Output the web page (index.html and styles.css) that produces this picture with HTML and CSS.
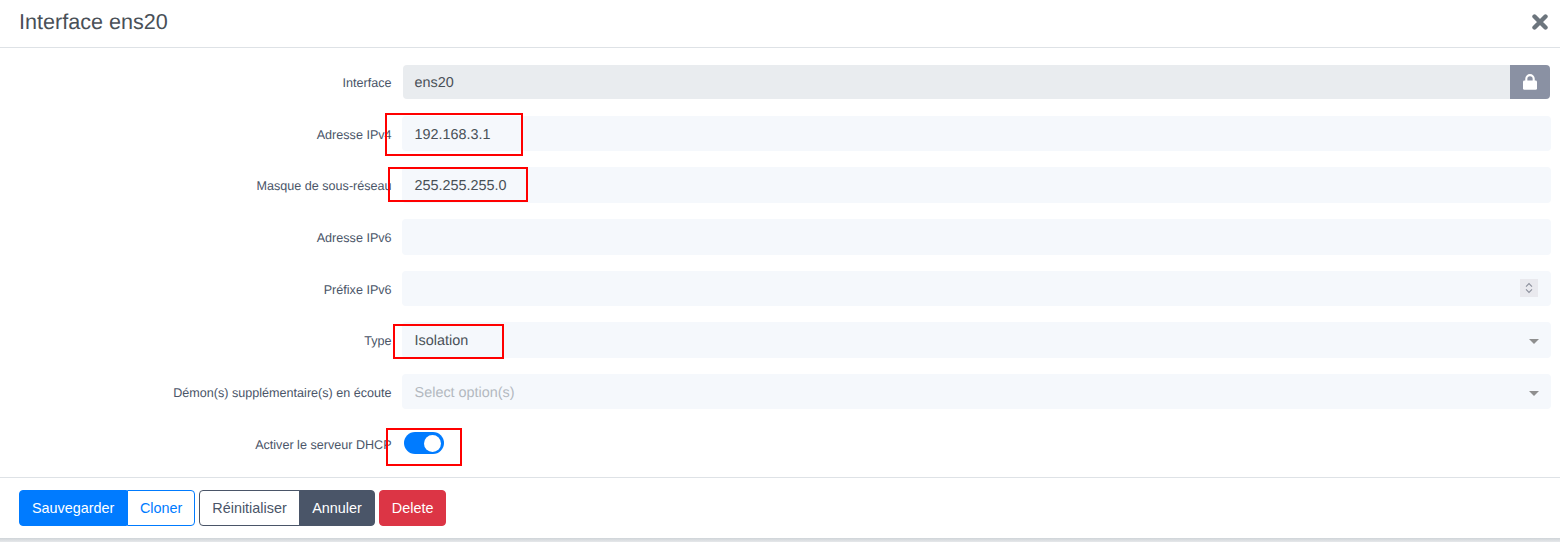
FILE: index.html
```html
<!DOCTYPE html>
<html lang="fr">
<head>
<meta charset="utf-8">
<title>Interface ens20</title>
<link rel="stylesheet" href="styles.css">
</head>
<body>
<div class="modal">
  <header class="head">
    <h1 class="title">Interface ens20</h1>
    <button class="close" aria-label="Fermer">
      <svg viewBox="0 0 16 16" width="16" height="16"><path d="M2.5 2.5 13.5 13.5M13.5 2.5 2.5 13.5" stroke="#6c757d" stroke-width="4.4" stroke-linecap="round" fill="none"/></svg>
    </button>
  </header>
  <form class="body">
    <div class="row">
      <label class="lab">Interface</label>
      <div class="field locked">
        <div class="input ro">ens20</div>
        <span class="addon">
          <svg viewBox="0 0 14 16" width="14" height="16"><path d="M3.3 7V4.8a3.7 3.7 0 0 1 7.4 0V7" stroke="#fff" stroke-width="2.1" fill="none"/><rect x="0" y="6.6" width="14" height="9.2" rx="1.4" fill="#fff"/></svg>
        </span>
      </div>
    </div>
    <div class="row">
      <label class="lab">Adresse IPv4</label>
      <div class="field"><div class="input">192.168.3.1</div><span class="mark m1"></span></div>
    </div>
    <div class="row">
      <label class="lab">Masque de sous-réseau</label>
      <div class="field"><div class="input">255.255.255.0</div><span class="mark m2"></span></div>
    </div>
    <div class="row">
      <label class="lab">Adresse IPv6</label>
      <div class="field"><div class="input"></div></div>
    </div>
    <div class="row">
      <label class="lab">Préfixe IPv6</label>
      <div class="field"><div class="input spin-wrap">
        <span class="spin"><svg viewBox="0 0 18 18" width="18" height="18"><path d="M6 7.6 9 4.6l3 3M6 10.4 9 13.4l3-3" stroke="#8b8f9c" stroke-width="1.1" fill="none"/></svg></span>
      </div></div>
    </div>
    <div class="row">
      <label class="lab">Type</label>
      <div class="field"><div class="input sel">Isolation<i class="caret"></i></div><span class="mark m3"></span></div>
    </div>
    <div class="row">
      <label class="lab">Démon(s) supplémentaire(s) en écoute</label>
      <div class="field"><div class="input sel ph">Select option(s)<i class="caret"></i></div></div>
    </div>
    <div class="row">
      <label class="lab lab-toggle">Activer le serveur DHCP</label>
      <div class="field"><span class="toggle"><span class="knob"></span></span><span class="mark m4"></span></div>
    </div>
  </form>
  <footer class="foot">
    <div class="group">
      <button class="btn primary">Sauvegarder</button><button class="btn out-primary">Cloner</button>
    </div>
    <div class="group">
      <button class="btn out-dark">Réinitialiser</button><button class="btn dark">Annuler</button>
    </div>
    <button class="btn danger">Delete</button>
  </footer>
</div>
<div class="strip"></div>
</body>
</html>
```
FILE: styles.css
```css
* { box-sizing: border-box; }
html, body { margin: 0; padding: 0; background: #fff; }
body {
  font-family: "Liberation Sans", Arial, sans-serif;
  color: #4a5568;
  height: 544px;
  overflow: hidden;
  text-rendering: geometricPrecision;
}
.modal { background: #fff; }
.head {
  height: 48px;
  border-bottom: 1px solid #dee2e6;
  display: flex;
  align-items: flex-start;
  justify-content: space-between;
  padding: 8px 12px 0 19px;
}
.title {
  margin: 0;
  font-size: 21.6px;
  line-height: 28px;
  font-weight: 400;
  color: #495057;
}
.close {
  border: 0;
  background: none;
  padding: 0;
  margin-top: 6px;
  line-height: 0;
}
.body {
  padding: 16.25px 9px 0 0;
  height: 429px;
}
.row {
  display: flex;
  height: 35.6px;
  margin-bottom: 16px;
  align-items: flex-start;
}
.lab {
  width: 391.6px;
  height: 35.6px;
  flex: none;
  text-align: right;
  font-size: 12.6px;
  line-height: 38px;
  color: #4a5568;
  white-space: nowrap;
}
.lab-toggle { line-height: 40px; }
.field {
  position: relative;
  flex: 1;
  margin-left: 10.4px;
  display: flex;
  min-height: 35.6px;
}
.input {
  flex: 1;
  height: 35.6px;
  background: #f5f8fc;
  border-radius: 4px;
  padding: 0 12.6px;
  font-size: 14.4px;
  line-height: 38px;
  color: #495057;
  position: relative;
}
.locked { margin-left: 11.4px; margin-right: 1px; }
.ro { background: #e9ecef; border-radius: 4px 0 0 4px; }
.locked .ro { padding-left: 11.6px; height: 34px; margin-top: 1px; line-height: 36px; }
.addon {
  width: 40px;
  height: 34px;
  margin-top: 1px;
  background: #8a91a3;
  border-radius: 0 4px 4px 0;
  display: flex;
  align-items: center;
  justify-content: center;
}
.spin-wrap { display: flex; align-items: center; justify-content: flex-end; }
.spin {
  width: 18px;
  height: 18px;
  background: #e9e9ee;
  line-height: 0;
}
.ph { color: #b3b8c0; }
.caret {
  position: absolute;
  right: 12px;
  top: 17px;
  width: 0;
  height: 0;
  border-left: 5px solid transparent;
  border-right: 5px solid transparent;
  border-top: 5px solid #8f8f8f;
}
.toggle {
  margin: 6.6px 0 0 2px;
  width: 40px;
  height: 22px;
  border-radius: 11px;
  background: #007bff;
  position: relative;
  display: block;
}
.knob {
  position: absolute;
  top: 2.5px;
  right: 2.5px;
  width: 17px;
  height: 17px;
  border-radius: 50%;
  background: #fff;
}
.mark {
  position: absolute;
  border: 2px solid #f00;
  pointer-events: none;
}
.m1 { left: -17px; top: -3px; width: 138px; height: 43px; }
.m2 { left: -14px; top: 0; width: 140px; height: 35px; }
.m3 { left: -9px; top: 1.5px; width: 111px; height: 35px; }
.m4 { left: -16px; top: 3px; width: 76px; height: 38px; }
.foot {
  border-top: 1px solid #dee2e6;
  height: 61px;
  padding: 12px 19px 0;
  display: flex;
  align-items: flex-start;
  gap: 4px;
}
.group { display: flex; }
.btn {
  font: 14.4px/22px "Liberation Sans", Arial, sans-serif;
  height: 36px;
  padding: 6px 12px;
  border: 1px solid transparent;
  border-radius: 4px;
  white-space: nowrap;
}
.group .btn:first-child { border-radius: 4px 0 0 4px; }
.group .btn:last-child { border-radius: 0 4px 4px 0; }
.out-primary { margin-left: -0.5px; }
.dark { margin-left: -0.5px; }
.primary { background: #007bff; border-color: #007bff; color: #fff; }
.out-primary { background: #fff; border-color: #007bff; color: #007bff; }
.out-dark { background: #fff; border-color: #4a5568; color: #4a5568; }
.dark { background: #4a5568; border-color: #4a5568; color: #fff; }
.danger { background: #dc3545; border-color: #dc3545; color: #fff; }
.strip { height: 4px; background: linear-gradient(#cfd4d8, #e6e8ea); }
```
